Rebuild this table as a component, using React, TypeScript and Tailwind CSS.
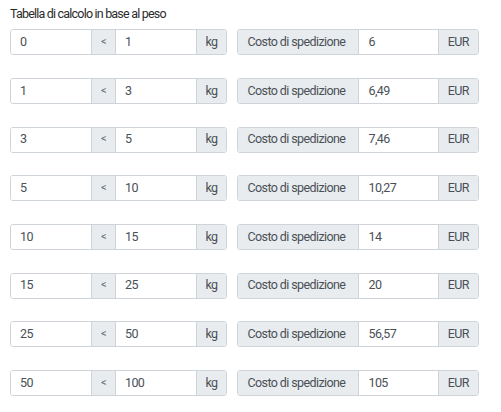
const rows: [string, string, string][] = [
  ["0", "1", "6"],
  ["1", "3", "6,49"],
  ["3", "5", "7,46"],
  ["5", "10", "10,27"],
  ["10", "15", "14"],
  ["15", "25", "20"],
  ["25", "50", "56,57"],
  ["50", "100", "105"],
];

export default function App() {
  return (
    <div
      className="w-[501px] h-[412px] bg-white px-[10px] pt-[4px] text-[12.5px] tracking-[-0.6px] text-[#495057]"
      style={{ fontFamily: "Roboto, 'Liberation Sans', sans-serif" }}
    >
      <div className="h-[20px] leading-[20px] tracking-[-0.8px] text-[#2b2b2b]">Tabella di calcolo in base al peso</div>
      <div className="mt-[5.3px] flex flex-col gap-[22.67px]">
        {rows.map(([from, to, cost], i) => (
          <div key={i} className="flex gap-[9.5px]">
            <div className="flex h-[26px] w-[217px] border border-[#ced4da] rounded-[3px] overflow-hidden">
              <div className="w-[80px] flex items-center pl-[9px] bg-white">{from}</div>
              <div className="w-[25px] flex items-center justify-center bg-[#e9ecef] border-x border-[#ced4da] text-[11px] text-[#6c757d]">&lt;</div>
              <div className="w-[80px] flex items-center pl-[9px] bg-white">{to}</div>
              <div className="flex-1 flex items-center justify-center bg-[#e9ecef] border-l border-[#ced4da]">kg</div>
            </div>
            <div className="flex h-[26px] w-[242.5px] border border-[#ced4da] rounded-[3px] overflow-hidden">
              <div className="w-[120px] flex items-center pl-[10px] bg-[#e9ecef]">Costo di spedizione</div>
              <div className="w-[81px] flex items-center pl-[10px] bg-white border-x border-[#ced4da]">{cost}</div>
              <div className="flex-1 flex items-center justify-center bg-[#e9ecef]">EUR</div>
            </div>
          </div>
        ))}
      </div>
    </div>
  );
}
